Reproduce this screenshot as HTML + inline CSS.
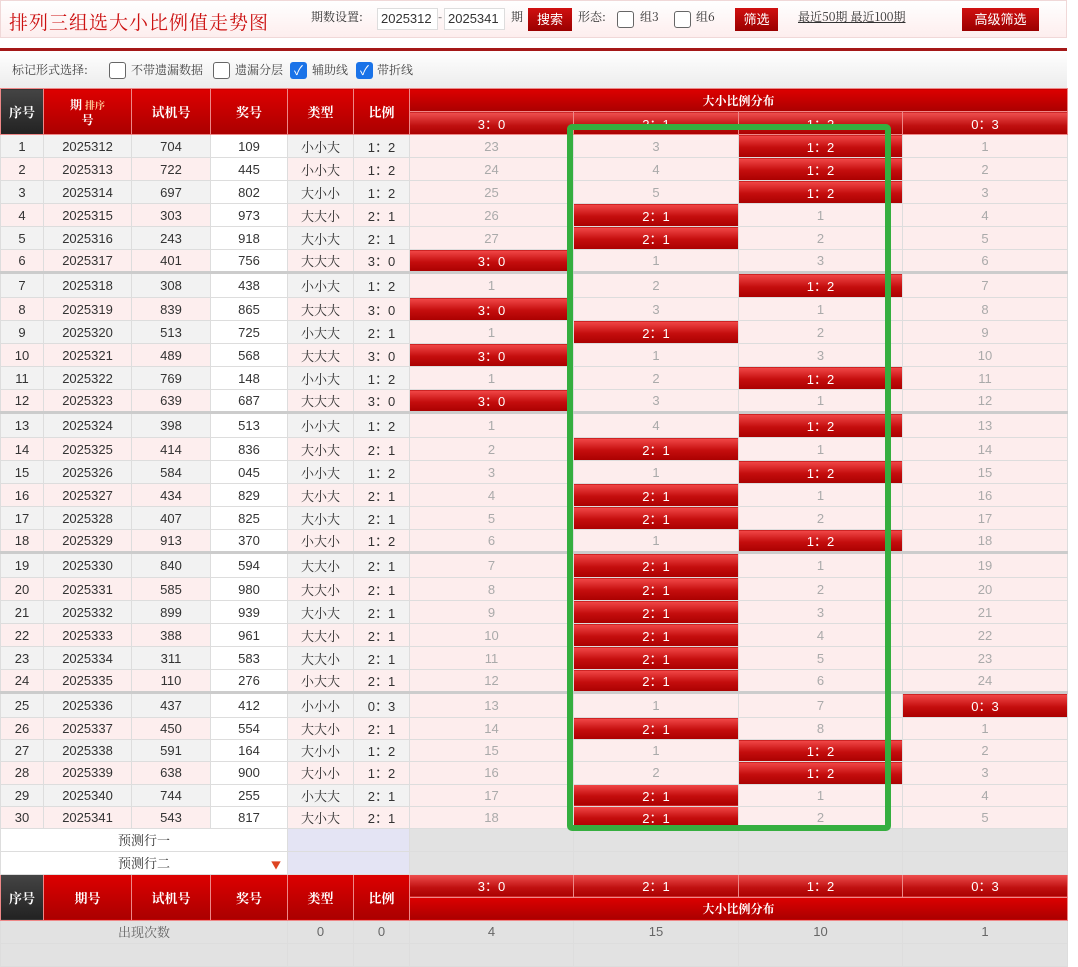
<!DOCTYPE html>
<html><head><meta charset="utf-8">
<style>
*{box-sizing:border-box;margin:0;padding:0}
body{width:1078px;height:950px;overflow:hidden;background:#fff;font-family:"Liberation Sans","Noto Sans CJK SC",sans-serif;position:relative}
.top{position:absolute;left:0;top:0;width:1067px;height:38px;background:linear-gradient(#fff,#fdeeee);border:1px solid #f0d8d8}
.title{position:absolute;left:8px;top:7px;font-size:19px;color:#c11;font-family:"Noto Serif CJK SC","Liberation Serif",serif;letter-spacing:1px}
.tb{position:absolute;top:8px;font-size:12px;color:#333;font-family:"Noto Serif CJK SC",serif}
.inp{position:absolute;top:8px;height:22px;width:61px;border:1px solid #ddd;background:#fff;font-size:13px;color:#333;line-height:20px;padding-left:3px}
.btn{position:absolute;top:8px;height:23px;background:linear-gradient(#d01010,#9a0000);color:#fff;font-size:13px;text-align:center;line-height:23px}
.cb{position:absolute;width:17px;height:17px;border:1px solid #666;border-radius:3px;background:#fff}
.cbc{position:absolute;width:17px;height:17px;border-radius:3px;background:#1a73e8;color:#fff;font-size:13px;line-height:17px;text-align:center}
.redline{position:absolute;left:0;top:48px;width:1067px;height:3px;background:#a41818}
.tool{position:absolute;left:0;top:51px;width:1067px;height:37px;background:linear-gradient(#fff,#ececec)}
table{position:absolute;left:0;top:88px;border-collapse:collapse;table-layout:fixed;width:1067px;font-size:13px}
td{border:1px solid #ddd;text-align:center;height:23px;padding:0;color:#333;white-space:nowrap;overflow:hidden}
tr.l td{height:22.2px}
.h td{background:linear-gradient(#d00,#a00);color:#fff;font-weight:bold;font-family:"Noto Serif CJK SC",serif;border-color:#e88}
.h td.k{background:linear-gradient(#444,#222)}
.h td.s{background:linear-gradient(#f05050,#c01010 60%,#a00);font-weight:normal;font-family:"Liberation Sans",sans-serif}
td.t{font-family:"Noto Serif CJK SC",serif}
tr.o td{background:#f2f2f2}
tr.e td{background:#fdeeee}
tr.o td.w,tr.e td.w{background:#fff}
tr td.d{background:#fdeded;color:#aaa}
tr td.r{background:linear-gradient(#f24848,#c40d0d 55%,#a00);color:#fff}
tr.g td{border-top:3px solid #ccc;height:25px}
tr.p td{background:#e2e2e2}
tr.p td.wh{background:#fff;font-family:"Noto Serif CJK SC",serif}
tr.p td.lv{background:#e4e4f4}
tr.c td{background:#e2e2e2;color:#666}
.green{position:absolute;left:567px;top:124px;width:324px;height:707px;border:6px solid #35ae3f;border-radius:5px}
</style></head><body>
<div class="top">
<div class="title">排列三组选大小比例值走势图</div>
</div>
<div class="tb" style="left:311px">期数设置:</div>
<div class="inp" style="left:377px">2025312</div>
<div class="tb" style="left:438px">-</div>
<div class="inp" style="left:444px">2025341</div>
<div class="tb" style="left:511px">期</div>
<div class="btn" style="left:528px;width:44px">搜索</div>
<div class="tb" style="left:578px">形态:</div>
<div class="cb" style="left:617px;top:11px"></div><div class="tb" style="left:640px">组3</div>
<div class="cb" style="left:674px;top:11px"></div><div class="tb" style="left:696px">组6</div>
<div class="btn" style="left:735px;width:43px">筛选</div>
<div class="tb" style="left:798px;text-decoration:underline">最近50期 最近100期</div>
<div class="btn" style="left:962px;width:77px">高级筛选</div>
<div class="redline"></div>
<div class="tool">
<div class="tb" style="left:12px;top:10px;color:#444">标记形式选择:</div>
<div class="cb" style="left:109px;top:11px"></div><div class="tb" style="left:131px;top:10px;color:#444">不带遗漏数据</div>
<div class="cb" style="left:213px;top:11px"></div><div class="tb" style="left:235px;top:10px;color:#444">遗漏分层</div>
<div class="cbc" style="left:290px;top:11px">✓</div><div class="tb" style="left:312px;top:10px;color:#444">辅助线</div>
<div class="cbc" style="left:356px;top:11px">✓</div><div class="tb" style="left:377px;top:10px;color:#444">带折线</div>
</div>
<table>
<colgroup><col style="width:43px"><col style="width:88px"><col style="width:79px"><col style="width:77px"><col style="width:66px"><col style="width:56px"><col style="width:164px"><col style="width:165px"><col style="width:164px"><col style="width:165px"></colgroup>
<tr class="h" style="height:22px"><td class="k" rowspan="2">序号</td><td rowspan="2" style="font-size:12px;line-height:15px">期 <span style="color:#fc9;font-size:10px">排序</span><br>号</td><td rowspan="2">试机号</td><td rowspan="2">奖号</td><td rowspan="2">类型</td><td rowspan="2">比例</td><td colspan="4" style="font-size:12px">大小比例分布</td></tr>
<tr class="h"><td class="s">3：0</td><td class="s">2：1</td><td class="s">1：2</td><td class="s">0：3</td></tr>
<tr class="o"><td>1</td><td>2025312</td><td>704</td><td class="w">109</td><td class="t">小小大</td><td>1：2</td><td class="d">23</td><td class="d">3</td><td class="r">1：2</td><td class="d">1</td></tr>
<tr class="e"><td>2</td><td>2025313</td><td>722</td><td class="w">445</td><td class="t">小小大</td><td>1：2</td><td class="d">24</td><td class="d">4</td><td class="r">1：2</td><td class="d">2</td></tr>
<tr class="o"><td>3</td><td>2025314</td><td>697</td><td class="w">802</td><td class="t">大小小</td><td>1：2</td><td class="d">25</td><td class="d">5</td><td class="r">1：2</td><td class="d">3</td></tr>
<tr class="e"><td>4</td><td>2025315</td><td>303</td><td class="w">973</td><td class="t">大大小</td><td>2：1</td><td class="d">26</td><td class="r">2：1</td><td class="d">1</td><td class="d">4</td></tr>
<tr class="o"><td>5</td><td>2025316</td><td>243</td><td class="w">918</td><td class="t">大小大</td><td>2：1</td><td class="d">27</td><td class="r">2：1</td><td class="d">2</td><td class="d">5</td></tr>
<tr class="e"><td>6</td><td>2025317</td><td>401</td><td class="w">756</td><td class="t">大大大</td><td>3：0</td><td class="r">3：0</td><td class="d">1</td><td class="d">3</td><td class="d">6</td></tr>
<tr class="o g"><td>7</td><td>2025318</td><td>308</td><td class="w">438</td><td class="t">小小大</td><td>1：2</td><td class="d">1</td><td class="d">2</td><td class="r">1：2</td><td class="d">7</td></tr>
<tr class="e"><td>8</td><td>2025319</td><td>839</td><td class="w">865</td><td class="t">大大大</td><td>3：0</td><td class="r">3：0</td><td class="d">3</td><td class="d">1</td><td class="d">8</td></tr>
<tr class="o"><td>9</td><td>2025320</td><td>513</td><td class="w">725</td><td class="t">小大大</td><td>2：1</td><td class="d">1</td><td class="r">2：1</td><td class="d">2</td><td class="d">9</td></tr>
<tr class="e"><td>10</td><td>2025321</td><td>489</td><td class="w">568</td><td class="t">大大大</td><td>3：0</td><td class="r">3：0</td><td class="d">1</td><td class="d">3</td><td class="d">10</td></tr>
<tr class="o"><td>11</td><td>2025322</td><td>769</td><td class="w">148</td><td class="t">小小大</td><td>1：2</td><td class="d">1</td><td class="d">2</td><td class="r">1：2</td><td class="d">11</td></tr>
<tr class="e"><td>12</td><td>2025323</td><td>639</td><td class="w">687</td><td class="t">大大大</td><td>3：0</td><td class="r">3：0</td><td class="d">3</td><td class="d">1</td><td class="d">12</td></tr>
<tr class="o g"><td>13</td><td>2025324</td><td>398</td><td class="w">513</td><td class="t">小小大</td><td>1：2</td><td class="d">1</td><td class="d">4</td><td class="r">1：2</td><td class="d">13</td></tr>
<tr class="e"><td>14</td><td>2025325</td><td>414</td><td class="w">836</td><td class="t">大小大</td><td>2：1</td><td class="d">2</td><td class="r">2：1</td><td class="d">1</td><td class="d">14</td></tr>
<tr class="o"><td>15</td><td>2025326</td><td>584</td><td class="w">045</td><td class="t">小小大</td><td>1：2</td><td class="d">3</td><td class="d">1</td><td class="r">1：2</td><td class="d">15</td></tr>
<tr class="e"><td>16</td><td>2025327</td><td>434</td><td class="w">829</td><td class="t">大小大</td><td>2：1</td><td class="d">4</td><td class="r">2：1</td><td class="d">1</td><td class="d">16</td></tr>
<tr class="o"><td>17</td><td>2025328</td><td>407</td><td class="w">825</td><td class="t">大小大</td><td>2：1</td><td class="d">5</td><td class="r">2：1</td><td class="d">2</td><td class="d">17</td></tr>
<tr class="e"><td>18</td><td>2025329</td><td>913</td><td class="w">370</td><td class="t">小大小</td><td>1：2</td><td class="d">6</td><td class="d">1</td><td class="r">1：2</td><td class="d">18</td></tr>
<tr class="o g"><td>19</td><td>2025330</td><td>840</td><td class="w">594</td><td class="t">大大小</td><td>2：1</td><td class="d">7</td><td class="r">2：1</td><td class="d">1</td><td class="d">19</td></tr>
<tr class="e"><td>20</td><td>2025331</td><td>585</td><td class="w">980</td><td class="t">大大小</td><td>2：1</td><td class="d">8</td><td class="r">2：1</td><td class="d">2</td><td class="d">20</td></tr>
<tr class="o"><td>21</td><td>2025332</td><td>899</td><td class="w">939</td><td class="t">大小大</td><td>2：1</td><td class="d">9</td><td class="r">2：1</td><td class="d">3</td><td class="d">21</td></tr>
<tr class="e"><td>22</td><td>2025333</td><td>388</td><td class="w">961</td><td class="t">大大小</td><td>2：1</td><td class="d">10</td><td class="r">2：1</td><td class="d">4</td><td class="d">22</td></tr>
<tr class="o"><td>23</td><td>2025334</td><td>311</td><td class="w">583</td><td class="t">大大小</td><td>2：1</td><td class="d">11</td><td class="r">2：1</td><td class="d">5</td><td class="d">23</td></tr>
<tr class="e"><td>24</td><td>2025335</td><td>110</td><td class="w">276</td><td class="t">小大大</td><td>2：1</td><td class="d">12</td><td class="r">2：1</td><td class="d">6</td><td class="d">24</td></tr>
<tr class="o g"><td>25</td><td>2025336</td><td>437</td><td class="w">412</td><td class="t">小小小</td><td>0：3</td><td class="d">13</td><td class="d">1</td><td class="d">7</td><td class="r">0：3</td></tr>
<tr class="e l"><td>26</td><td>2025337</td><td>450</td><td class="w">554</td><td class="t">大大小</td><td>2：1</td><td class="d">14</td><td class="r">2：1</td><td class="d">8</td><td class="d">1</td></tr>
<tr class="o l"><td>27</td><td>2025338</td><td>591</td><td class="w">164</td><td class="t">大小小</td><td>1：2</td><td class="d">15</td><td class="d">1</td><td class="r">1：2</td><td class="d">2</td></tr>
<tr class="e l"><td>28</td><td>2025339</td><td>638</td><td class="w">900</td><td class="t">大小小</td><td>1：2</td><td class="d">16</td><td class="d">2</td><td class="r">1：2</td><td class="d">3</td></tr>
<tr class="o l"><td>29</td><td>2025340</td><td>744</td><td class="w">255</td><td class="t">小大大</td><td>2：1</td><td class="d">17</td><td class="r">2：1</td><td class="d">1</td><td class="d">4</td></tr>
<tr class="e l"><td>30</td><td>2025341</td><td>543</td><td class="w">817</td><td class="t">大小大</td><td>2：1</td><td class="d">18</td><td class="r">2：1</td><td class="d">2</td><td class="d">5</td></tr>
<tr class="p"><td colspan="4" class="wh">预测行一</td><td colspan="2" class="lv"></td><td></td><td></td><td></td><td></td></tr>
<tr class="p"><td colspan="4" class="wh" style="position:relative">预测行二<span style="position:absolute;right:6px;top:5px;color:#d42;font-size:10px">▼</span></td><td colspan="2" class="lv"></td><td></td><td></td><td></td><td></td></tr>
<tr class="h"><td class="k" rowspan="2">序号</td><td rowspan="2">期号</td><td rowspan="2">试机号</td><td rowspan="2">奖号</td><td rowspan="2">类型</td><td rowspan="2">比例</td><td class="s">3：0</td><td class="s">2：1</td><td class="s">1：2</td><td class="s">0：3</td></tr>
<tr class="h"><td colspan="4" style="font-size:12px">大小比例分布</td></tr>
<tr class="c"><td colspan="4" class="t">出现次数</td><td>0</td><td>0</td><td>4</td><td>15</td><td>10</td><td>1</td></tr>
<tr class="c"><td colspan="4"></td><td></td><td></td><td></td><td></td><td></td><td></td></tr>
</table>
<div class="green"></div>
</body></html>
